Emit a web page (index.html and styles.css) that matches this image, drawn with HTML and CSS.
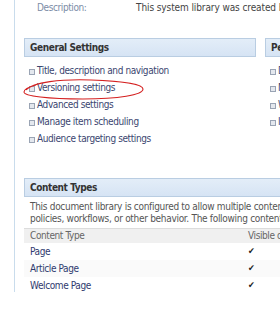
FILE: index.html
```html
<!DOCTYPE html>
<html lang="en">
<head>
    <meta charset="UTF-8">
    <title>Document Library Settings</title>
    <link rel="stylesheet" href="styles.css">
</head>
<body>
    <div class="page">
        <div class="desc-row">
            <span class="desc-label">Description:</span>
            <span class="desc-text">This system library was created by the Publishing feature</span>
        </div>

        <div class="settings">
            <div class="settings-col first">
                <div class="section-head">General Settings</div>
                <ul class="links">
                    <li>Title, description and navigation</li>
                    <li class="marked">Versioning settings
                        <svg class="circle" width="126" height="24" viewBox="0 0 126 24">
                            <path d="M5 12 C 12 4, 40 1, 70 2 C 100 3, 122 6, 122 11 C 122 17, 97 21, 62 21 C 27 21, 3 18, 3 14 C 3 11, 7 9, 15 7" fill="none" stroke="#d42020" stroke-width="1.1"/>
                        </svg>
                    </li>
                    <li>Advanced settings</li>
                    <li>Manage item scheduling</li>
                    <li>Audience targeting settings</li>
                </ul>
            </div>
            <div class="settings-col second">
                <div class="section-head">Permissions and Management</div>
                <ul class="links">
                    <li>Delete this document library</li>
                    <li>Manage files which have no checked in version</li>
                    <li>Workflow settings</li>
                    <li>Information management policy settings</li>
                </ul>
            </div>
        </div>

        <div class="content-types">
            <div class="section-head">Content Types</div>
            <p class="ct-text">This document library is configured to allow multiple content types. Use content types to specify the information you want to display about an item, in addition to its<br>policies, workflows, or other behavior. The following content types are currently available in this library:</p>
            <table class="ct-table">
                <tr class="ct-head">
                    <td class="col-name">Content Type</td>
                    <td class="col-vis">Visible on New Button</td>
                </tr>
                <tr>
                    <td class="col-name"><a>Page</a></td>
                    <td class="col-vis check">&#10004;</td>
                </tr>
                <tr class="alt">
                    <td class="col-name"><a>Article Page</a></td>
                    <td class="col-vis check">&#10004;</td>
                </tr>
                <tr>
                    <td class="col-name"><a>Welcome Page</a></td>
                    <td class="col-vis check">&#10004;</td>
                </tr>
            </table>
        </div>
    </div>
</body>
</html>
```

FILE: styles.css
```css
* {
    margin: 0;
    padding: 0;
    box-sizing: border-box;
}

body {
    font-family: "DejaVu Sans Condensed", "Liberation Sans", sans-serif;
    font-size: 10px;
    letter-spacing: -0.4px;
    background: white;
    color: #333;
    width: 280px;
    height: 320px;
    overflow: hidden;
}

.page {
    margin-left: 14px;
    width: 700px;
    height: 292px;
    border-left: 1px solid #c9dcec;
    padding-left: 9px;
}

.desc-row {
    display: flex;
    height: 38px;
    padding-top: 2px;
    line-height: 12px;
    white-space: nowrap;
}

.desc-label {
    width: 112px;
    padding-left: 13px;
    color: #7c8ca6;
}

.desc-text {
    color: #444;
    letter-spacing: -0.1px;
}

.settings {
    display: flex;
    gap: 9px;
}

.settings-col.first {
    width: 232px;
}

.settings-col.second {
    width: 300px;
}

.section-head {
    height: 19px;
    line-height: 17px;
    padding-left: 5px;
    font-weight: bold;
    color: #333;
    border: 1px solid #b9cde2;
    background: linear-gradient(#e3edf8, #d6e4f4);
    white-space: nowrap;
}

.links {
    list-style: none;
    padding-top: 5px;
}

.links li {
    position: relative;
    height: 17px;
    line-height: 17px;
    padding-left: 13px;
    color: #3b4670;
    white-space: nowrap;
}

.links li::before {
    content: "";
    position: absolute;
    left: 5px;
    top: 7px;
    width: 4px;
    height: 4px;
    border: 1px solid #9aa4b4;
    background: #e4e8ee;
}

.circle {
    position: absolute;
    left: -3px;
    top: -1px;
}

.content-types {
    margin-top: 31px;
    width: 400px;
}

.ct-text {
    padding: 4px 0 0 6px;
    height: 31px;
    line-height: 12px;
    color: #555;
    letter-spacing: -0.3px;
    white-space: nowrap;
    overflow: hidden;
}

.ct-table {
    width: 100%;
    border-collapse: collapse;
    table-layout: fixed;
}

.ct-table td {
    height: 17px;
    padding-left: 6px;
    white-space: nowrap;
    overflow: hidden;
}

.ct-head td {
    height: 14px;
    background: #f0f0f0;
    border-top: 1px solid #dcdcdc;
    color: #666;
}

.ct-table .alt td {
    background: #fafafa;
}

.col-name {
    width: 218px;
}

.col-name a {
    color: #2f3a6e;
}

.check {
    color: #222;
    font-size: 9px;
}
```
